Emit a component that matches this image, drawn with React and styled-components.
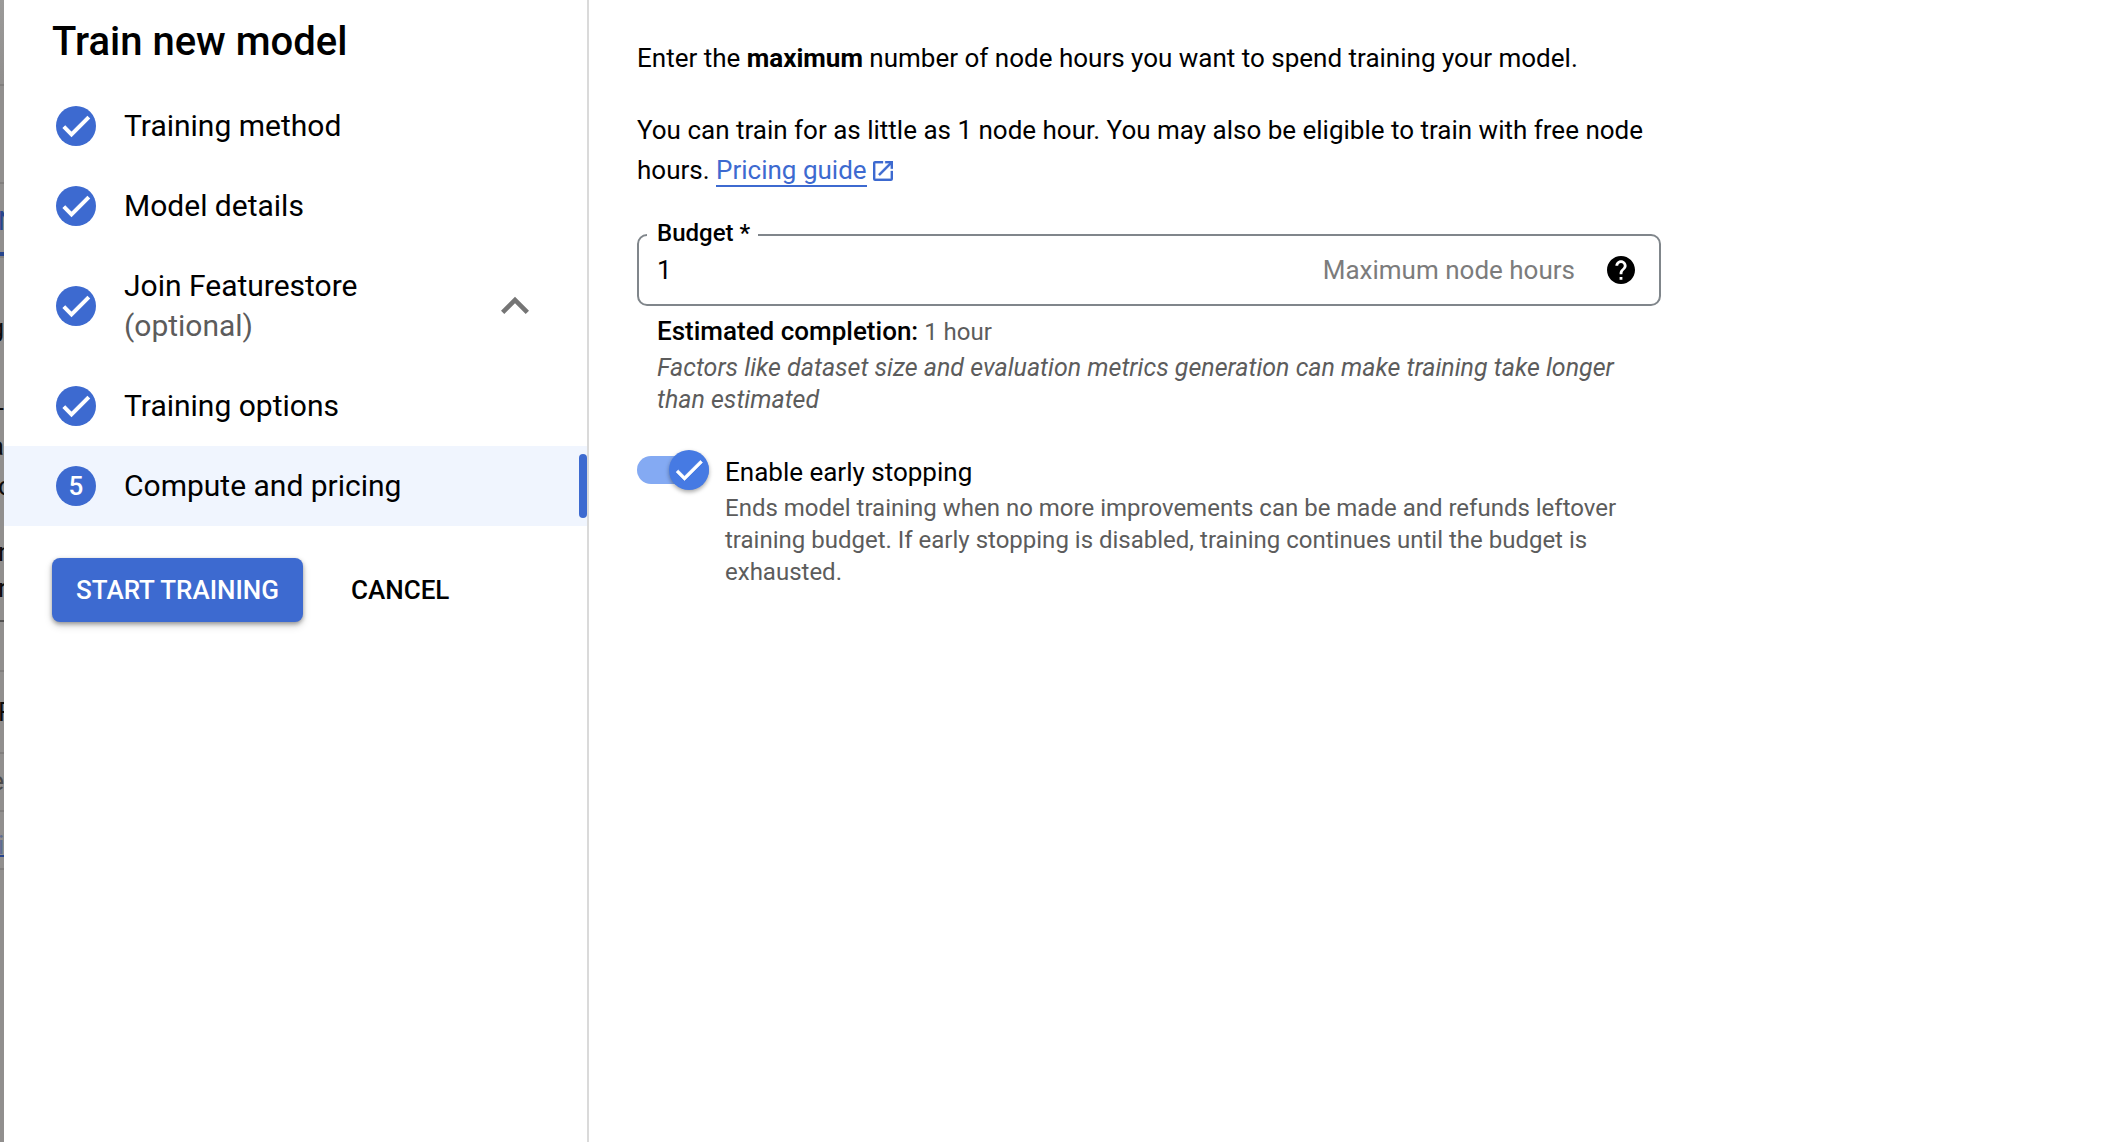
import React, { useState } from "react";
import styled, { createGlobalStyle } from "styled-components";

const blue = "#3d6ad0";
const ink = "#000";
const muted = "#5c5c5c";

const GlobalStyle = createGlobalStyle`
  *, *::before, *::after { box-sizing: border-box; }
  body {
    margin: 0;
    background: #fff;
    color: ${ink};
    font-family: Roboto, "Liberation Sans", sans-serif;
    font-size: 26px;
    line-height: 40px;
  }
  button, input { font: inherit; color: inherit; }
`;

const Screen = styled.div`
  display: grid;
  grid-template-columns: 4px 585px minmax(0, 1fr);
  min-height: 100vh;
`;

/* Sliver of the dimmed page that stays visible beside the drawer */
const Backdrop = styled.div`
  display: flex;
  flex-direction: column;
  overflow: hidden;
  background: linear-gradient(#9b9a99, #918f8e 80px);
`;

const Rule = styled.div`
  flex: none;
  height: ${(p) => p.$size || 2}px;
  margin-top: ${(p) => p.$gap}px;
  background: ${(p) => p.$color || "#817f7e"};
`;

const Scrap = styled.div`
  flex: none;
  display: flex;
  justify-content: ${(p) => (p.$end ? "flex-end" : "flex-start")};
  height: 32px;
  line-height: 32px;
  margin-top: ${(p) => p.$gap}px;
  text-indent: ${(p) => (p.$end ? 0 : -2)}px;
  color: ${(p) => p.$color || "#0c0b0b"};
`;

const Sidebar = styled.aside`
  display: flex;
  flex-direction: column;
  padding-top: 10px;
  background: #fff;
  border-right: 2px solid #dadada;
`;

const Title = styled.h1`
  margin: 0 0 12px;
  padding: 0 48px;
  font-size: 40px;
  font-weight: 500;
  line-height: 64px;
`;

const StepList = styled.ol`
  margin: 0;
  padding: 0;
  list-style: none;
`;

const StepItem = styled.li`
  display: flex;
  align-items: center;
  justify-content: space-between;
  background: ${(p) => (p.$active ? "#f0f5fe" : "transparent")};
`;

const StepButton = styled.button`
  flex: 1;
  display: flex;
  align-items: center;
  gap: 28px;
  padding: 20px 0 20px 52px;
  border: 0;
  background: none;
  font-size: 30px;
  text-align: left;
  cursor: pointer;
`;

const StepBadge = styled.span`
  display: flex;
  align-items: center;
  justify-content: center;
  width: 40px;
  height: 40px;
  border-radius: 50%;
  background: ${blue};
  color: #fff;
  font-size: 26px;
  font-weight: 500;
`;

const StepLabel = styled.span`
  display: flex;
  flex-direction: column;
`;

const Optional = styled.span`
  color: ${muted};
`;

const ActiveBar = styled.span`
  width: 8px;
  height: 64px;
  border-radius: 4px;
  background: ${blue};
`;

const CollapseButton = styled.button`
  display: flex;
  margin-right: 44px;
  padding: 0;
  border: 0;
  background: none;
  color: #757575;
  cursor: pointer;
`;

const Actions = styled.div`
  display: flex;
  gap: 24px;
  padding: 32px 48px;
`;

const ActionButton = styled.button`
  height: 64px;
  padding: 0 24px;
  border: 0;
  border-radius: 8px;
  background: ${(p) => (p.$primary ? blue : "transparent")};
  color: ${(p) => (p.$primary ? "#fff" : ink)};
  box-shadow: ${(p) =>
    p.$primary ? "0 2px 4px rgba(0, 0, 0, 0.35), 0 4px 8px rgba(0, 0, 0, 0.14)" : "none"};
  font-weight: 500;
  text-transform: uppercase;
  cursor: pointer;
`;

const Content = styled.main`
  padding: 38px 48px;
`;

const Form = styled.form`
  max-width: 1024px;
`;

const Paragraph = styled.p`
  margin: 0 0 32px;
`;

const Strong = styled.strong`
  color: ${ink};
  font-size: 26px;
  font-weight: ${(p) => p.$weight || 500};
  line-height: 32px;
`;

const Link = styled.a`
  color: ${blue};
  text-decoration: none;
  white-space: nowrap;

  svg { margin-left: 6px; vertical-align: -2px; }
`;

const LinkText = styled.span`
  border-bottom: 2px solid ${blue};
`;

const Field = styled.div`
  position: relative;
  display: flex;
  align-items: center;
  height: 72px;
  margin-top: 44px;
  padding: 0 24px 0 18px;
  border: 2px solid #80868b;
  border-radius: 10px;
`;

const FieldLabel = styled.label`
  position: absolute;
  top: -19px;
  left: 8px;
  padding: 0 8px 0 10px;
  background: #fff;
  font-size: 24px;
  font-weight: 500;
  line-height: 32px;
`;

const FieldInput = styled.input`
  flex: 1;
  min-width: 0;
  padding: 0;
  border: 0;
  outline: 0;
  background: none;
`;

const Suffix = styled.span`
  margin-right: 32px;
  color: #7c7c7c;
`;

const HelpButton = styled.button`
  display: flex;
  padding: 0;
  border: 0;
  background: none;
  cursor: pointer;
`;

const Hint = styled.div`
  padding: 6px 20px 0;
  color: ${muted};
  font-size: 24px;
`;

const HintNote = styled.em`
  display: block;
  font-size: 25px;
  line-height: 32px;
`;

const ToggleRow = styled.div`
  display: flex;
  gap: 16px;
  margin-top: 34px;
`;

const Switch = styled.span`
  position: relative;
  flex: none;
  display: flex;
  align-items: center;
  width: 72px;
  height: 40px;
`;

const SwitchInput = styled.input`
  position: absolute;
  inset: 0;
  width: 100%;
  height: 100%;
  margin: 0;
  opacity: 0;
  cursor: pointer;
`;

const Track = styled.span`
  display: flex;
  align-items: center;
  justify-content: ${(p) => (p.$on ? "flex-end" : "flex-start")};
  width: 72px;
  height: 28px;
  border-radius: 14px;
  background: ${(p) => (p.$on ? "#84aaf3" : "#bdbdbd")};
`;

const Knob = styled.span`
  display: flex;
  align-items: center;
  justify-content: center;
  width: 40px;
  height: 40px;
  border-radius: 50%;
  background: ${(p) => (p.$on ? "#467ae3" : "#fafafa")};
  box-shadow: 0 2px 4px rgba(0, 0, 0, 0.35);
  color: #fff;
`;

const ToggleText = styled.div`
  padding-top: 2px;
`;

const ToggleLabel = styled.label`
  display: block;
`;

const ToggleNote = styled.p`
  margin: 0;
  color: ${muted};
  font-size: 24px;
  line-height: 32px;
`;

const Icon = ({ size, box = "0 0 24 24", d, bold = 0 }) => (
  <svg
    width={size}
    height={size}
    viewBox={box}
    fill="currentColor"
    stroke={bold ? "currentColor" : "none"}
    strokeWidth={bold}
    aria-hidden="true"
  >
    <path d={d} />
  </svg>
);

const paths = {
  check: "M9 16.17L4.83 12l-1.42 1.41L9 19 21 7l-1.41-1.41z",
  collapse: "M12 8l-6 6 1.41 1.41L12 10.83l4.59 4.58L18 14z",
  open: "M19 19H5V5h7V3H5c-1.11 0-2 .9-2 2v14c0 1.1.89 2 2 2h14c1.1 0 2-.9 2-2v-7h-2v7zM14 3v2h3.59l-9.83 9.83 1.41 1.41L19 6.41V10h2V3h-7z",
  help: "M12 2C6.48 2 2 6.48 2 12s4.48 10 10 10 10-4.48 10-10S17.52 2 12 2zm1 17h-2v-2h2v2zm2.07-7.75l-.9.92C13.45 12.9 13 13.5 13 15h-2v-.5c0-1.1.45-2.1 1.17-2.83l1.24-1.26c.37-.36.59-.86.59-1.41 0-1.1-.9-2-2-2s-2 .9-2 2H8c0-2.21 1.79-4 4-4s4 1.79 4 4c0 .88-.36 1.68-.93 2.25z",
};

const steps = [
  { label: "Training method", done: true },
  { label: "Model details", done: true },
  { label: "Join Featurestore", done: true, optional: true },
  { label: "Training options", done: true },
  { label: "Compute and pricing", active: true },
];

export default function App() {
  const [budget, setBudget] = useState("1");
  const [early, setEarly] = useState(true);

  return (
    <>
      <GlobalStyle />
      <Screen>
        <Backdrop aria-hidden="true">
          <Rule $gap={84} />
          <Rule $gap={96} />
          <Scrap $gap={21} $color="#27458d">N</Scrap>
          <Rule $gap={15} $size={4} $color="#27458d" />
          <Rule $gap={0} />
          <Scrap $gap={54} $end>g</Scrap>
          <Scrap $gap={48} $end>-</Scrap>
          <Scrap $gap={6} $end>a</Scrap>
          <Scrap $gap={8}>c</Scrap>
          <Scrap $gap={34}>n</Scrap>
          <Scrap $gap={4}>r</Scrap>
          <Rule $gap={16} $color="#535252" />
          <Rule $gap={48} />
          <Scrap $gap={24}>F</Scrap>
          <Rule $gap={24} />
          <Scrap $gap={11} $color="#4a4949" $end>e</Scrap>
          <Rule $gap={13} />
          <Scrap $gap={17} $color="#5d6c92">i</Scrap>
          <Rule $gap={-6} $color="#27458d" />
          <Rule $gap={11} />
        </Backdrop>

        <Sidebar>
          <Title>Train new model</Title>
          <StepList>
            {steps.map((step, i) => (
              <StepItem key={step.label} $active={step.active}>
                <StepButton type="button" aria-current={step.active ? "step" : undefined}>
                  <StepBadge>
                    {step.done ? <Icon size={36} d={paths.check} bold={0.7} /> : i + 1}
                  </StepBadge>
                  <StepLabel>
                    {step.label}
                    {step.optional && <Optional>(optional)</Optional>}
                  </StepLabel>
                </StepButton>
                {step.optional && (
                  <CollapseButton type="button" aria-label="Collapse">
                    <Icon size={56} d={paths.collapse} />
                  </CollapseButton>
                )}
                {step.active && <ActiveBar />}
              </StepItem>
            ))}
          </StepList>
          <Actions>
            <ActionButton type="submit" form="pricing" $primary>Start training</ActionButton>
            <ActionButton type="button">Cancel</ActionButton>
          </Actions>
        </Sidebar>

        <Content>
          <Form id="pricing" onSubmit={(e) => e.preventDefault()}>
            <Paragraph>
              Enter the <Strong $weight={700}>maximum</Strong> number of node hours you want to
              spend training your model.
            </Paragraph>
            <Paragraph>
              You can train for as little as 1 node hour. You may also be eligible to train with
              free node hours.{" "}
              <Link href="#pricing-guide">
                <LinkText>Pricing guide</LinkText>
                <Icon size={20} box="3 3 18 18" d={paths.open} bold={0.3} />
              </Link>
            </Paragraph>

            <Field>
              <FieldLabel htmlFor="budget">Budget *</FieldLabel>
              <FieldInput
                id="budget"
                inputMode="numeric"
                value={budget}
                onChange={(e) => setBudget(e.target.value)}
              />
              <Suffix>Maximum node hours</Suffix>
              <HelpButton type="button" aria-label="Help">
                <Icon size={28} box="2 2 20 20" d={paths.help} />
              </HelpButton>
            </Field>
            <Hint>
              <Strong>Estimated completion:</Strong> 1 hour
              <HintNote>
                Factors like dataset size and evaluation metrics generation can make training take
                longer than estimated
              </HintNote>
            </Hint>

            <ToggleRow>
              <Switch>
                <Track $on={early}>
                  <Knob $on={early}>{early && <Icon size={36} d={paths.check} bold={0.4} />}</Knob>
                </Track>
                <SwitchInput
                  id="early"
                  type="checkbox"
                  role="switch"
                  checked={early}
                  onChange={(e) => setEarly(e.target.checked)}
                />
              </Switch>
              <ToggleText>
                <ToggleLabel htmlFor="early">Enable early stopping</ToggleLabel>
                <ToggleNote>
                  Ends model training when no more improvements can be made and refunds leftover
                  training budget. If early stopping is disabled, training continues until the
                  budget is exhausted.
                </ToggleNote>
              </ToggleText>
            </ToggleRow>
          </Form>
        </Content>
      </Screen>
    </>
  );
}
